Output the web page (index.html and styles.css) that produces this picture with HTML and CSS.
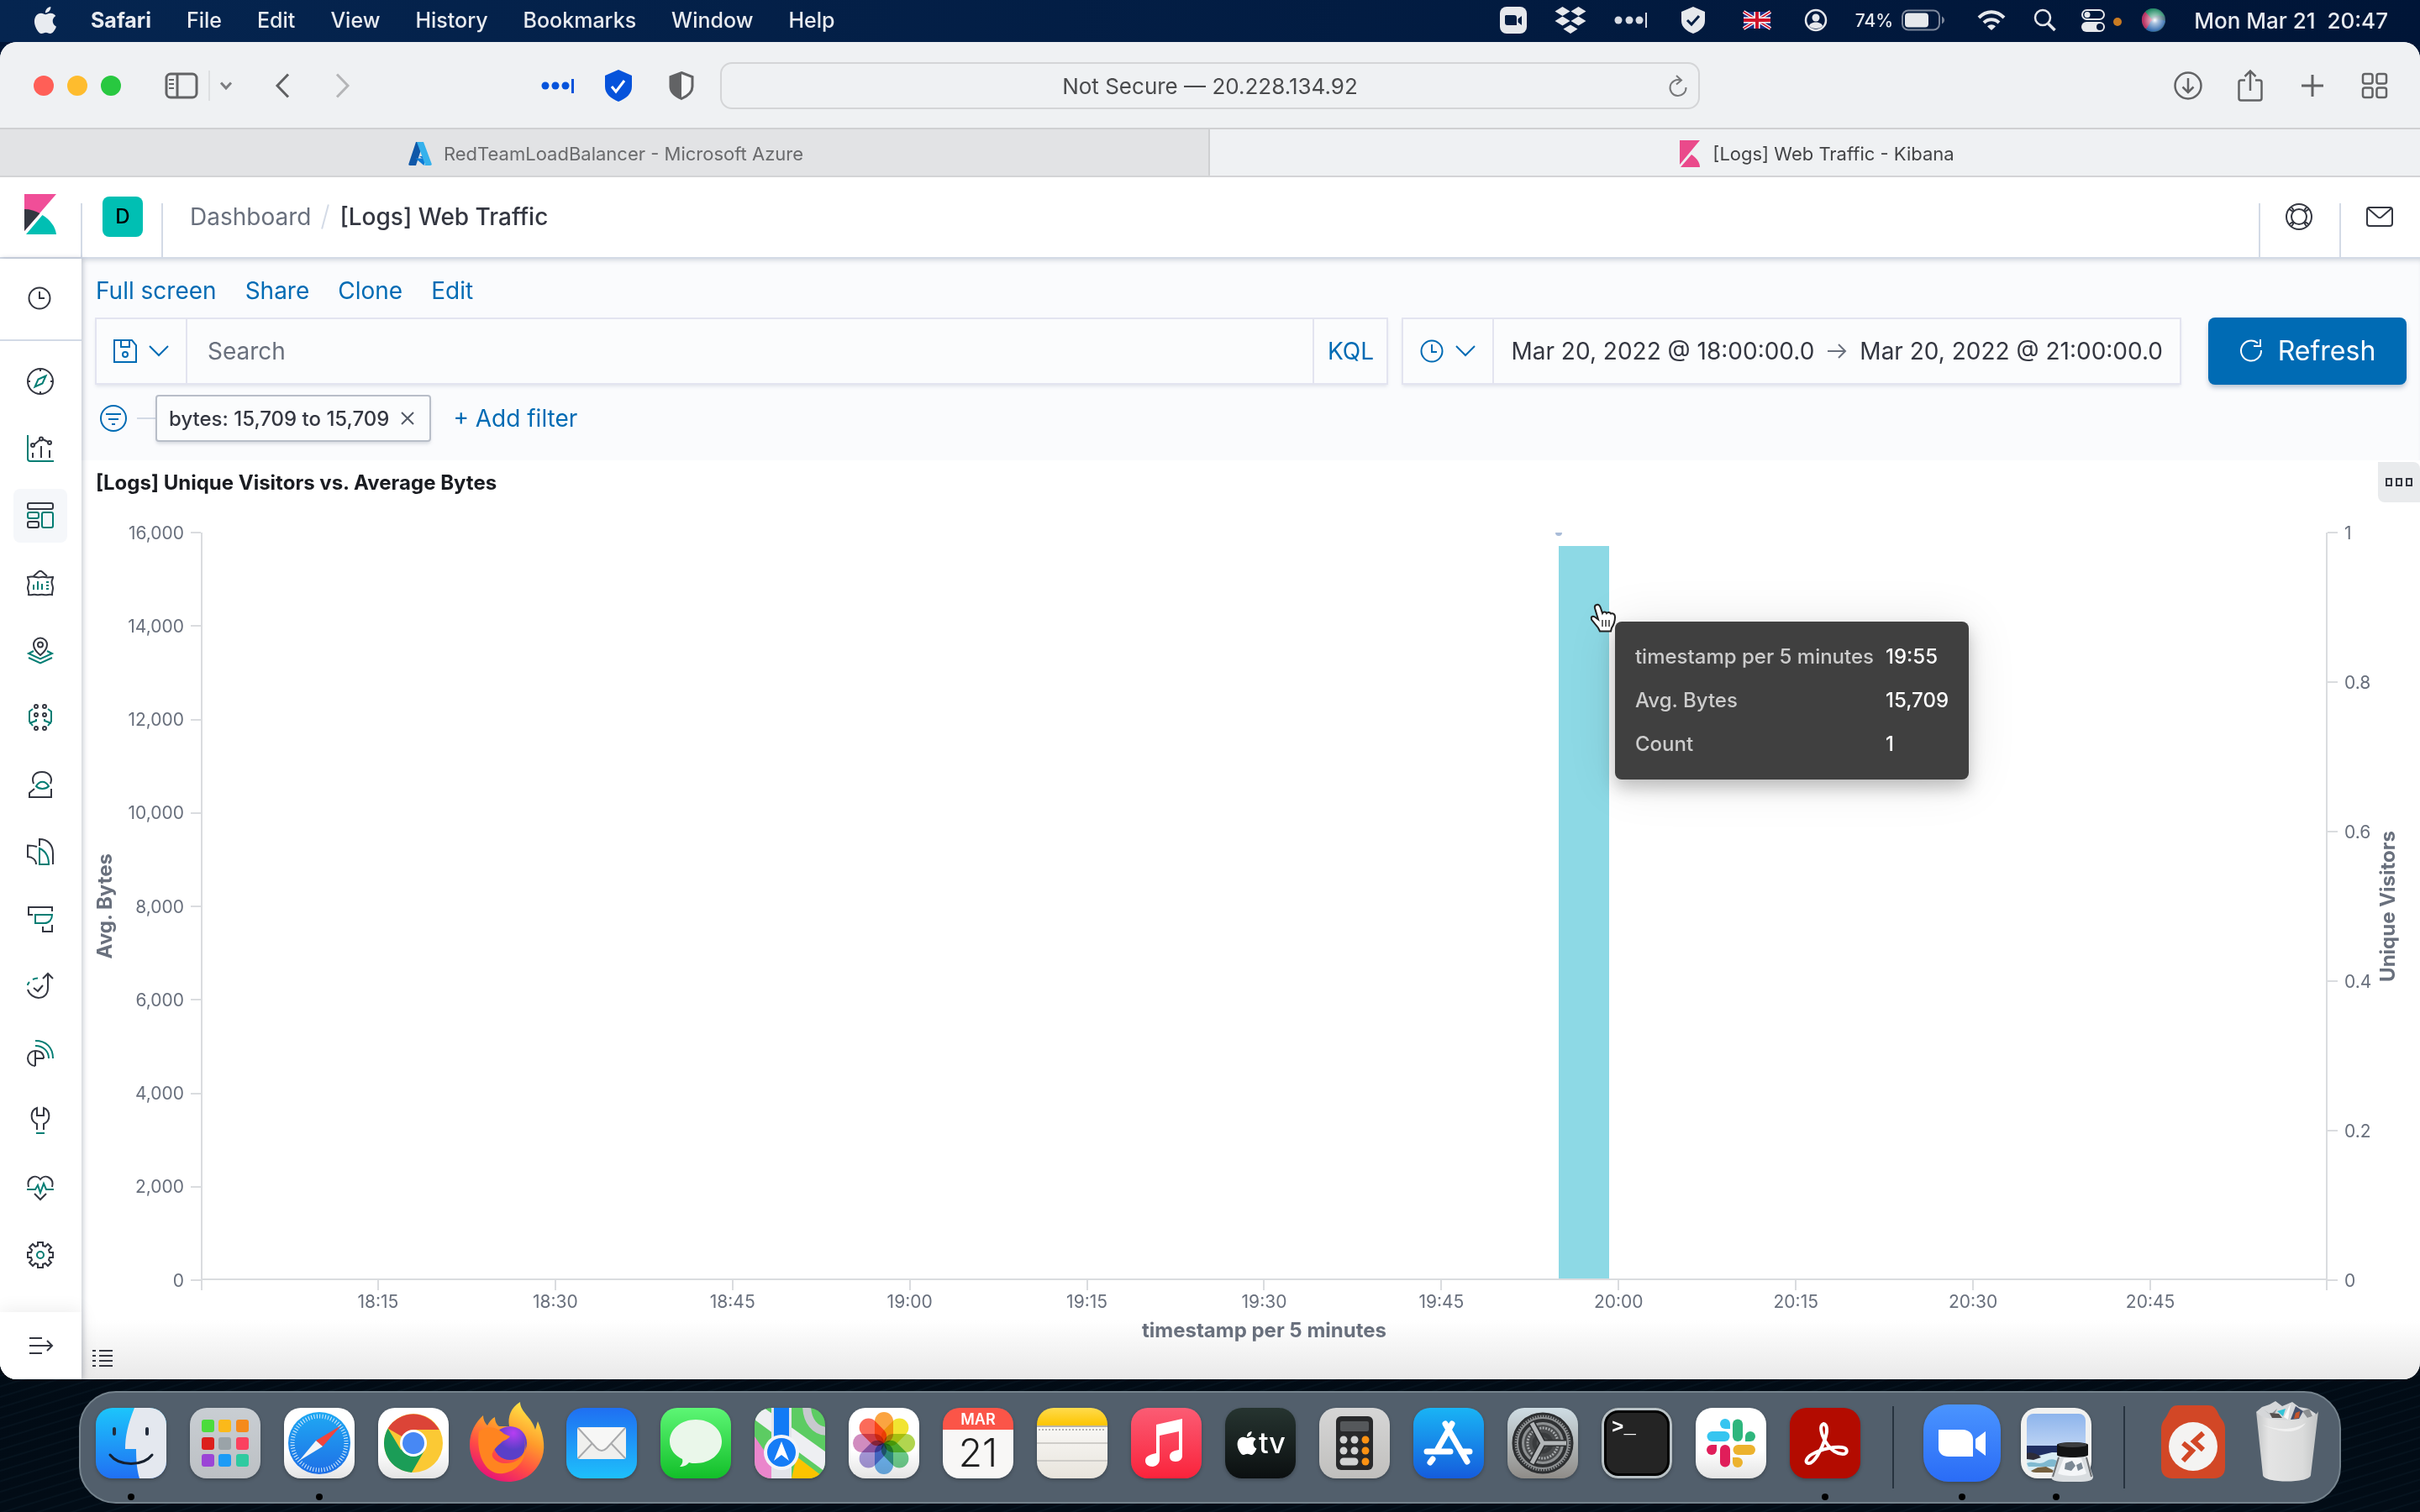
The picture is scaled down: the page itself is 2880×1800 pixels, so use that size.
FILE: index.html
```html
<!DOCTYPE html>
<html lang="en">
<head>
<meta charset="utf-8">
<title>[Logs] Web Traffic - Kibana</title>
<link rel="stylesheet" href="styles.css">
</head>
<body>
<header class="menubar">
  <nav class="menus" aria-label="Menu bar">
    <svg class="apple" viewBox="0 0 24 24" width="32" height="32" fill="#e8ebf0"><path d="M12.152 6.896c-.948 0-2.415-1.078-3.96-1.04-2.04.027-3.91 1.183-4.961 3.014-2.117 3.675-.546 9.103 1.519 12.09 1.013 1.454 2.208 3.09 3.792 3.039 1.52-.065 2.09-.987 3.935-.987 1.831 0 2.35.987 3.96.948 1.637-.026 2.676-1.48 3.676-2.948 1.156-1.688 1.636-3.325 1.662-3.415-.039-.013-3.182-1.221-3.22-4.857-.026-3.04 2.48-4.494 2.597-4.559-1.429-2.09-3.623-2.324-4.39-2.376-2-.156-3.675 1.09-4.61 1.09zM15.53 3.83c.843-1.012 1.4-2.427 1.245-3.83-1.207.052-2.662.805-3.532 1.818-.78.896-1.454 2.338-1.273 3.714 1.338.104 2.715-.688 3.559-1.701"/></svg>
    <button class="menu app">Safari</button>
    <button class="menu">File</button>
    <button class="menu">Edit</button>
    <button class="menu">View</button>
    <button class="menu">History</button>
    <button class="menu">Bookmarks</button>
    <button class="menu">Window</button>
    <button class="menu">Help</button>
  </nav>
  <div class="status">
    <svg width="32" height="32" viewBox="0 0 32 32"><rect width="32" height="32" rx="8" fill="#e6e8ec"/><path d="M7 10h10a3 3 0 0 1 3 3v9H9a3 3 0 0 1-3-3v-8zM21.500 14.500 26 11v11l-4.500-3.500z" fill="#051d42"/></svg>
    <svg width="40" height="34" viewBox="0 0 40 34" fill="#e6e8ec"><path d="M10.500 1l9 5.500-9 5.500-9-5.500zM29.500 1l9 5.500-9 5.500-9-5.500zM10.500 12.500l9 5.500-9 5.500-9-5.500zM29.500 12.500l9 5.500-9 5.500-9-5.500zM20 22.500l8.500 5-8.500 5.500-8.500-5.500z"/></svg>
    <svg width="40" height="20" viewBox="0 0 40 20" fill="#d8dce4"><circle cx="5" cy="10" r="4.500"/><circle cx="18" cy="10" r="4.500"/><circle cx="30" cy="10" r="4.500"/><path d="M37 1h2v18h-2z"/></svg>
    <svg width="44" height="34" viewBox="0 0 44 34"><path d="M22 1l14 6v11c0 7-6 12-14 15C14 30 8 25 8 18V7z" fill="#e6e8ec"/><path d="M15 17l5 5 9-10" fill="none" stroke="#041d42" stroke-width="3"/></svg>
    <svg width="44" height="20" viewBox="0 0 44 20"><path fill="#1b2f86" d="M6 0h32v20H6z"/><path d="M6 0l32 20M38 0L6 20" stroke="#fff" stroke-width="4"/><path d="M6 0l32 20M38 0L6 20" stroke="#d0142c" stroke-width="1.500"/><path d="M22 0v20M6 10h32" stroke="#fff" stroke-width="7"/><path d="M22 0v20M6 10h32" stroke="#d0142c" stroke-width="4"/></svg>
    <svg width="32" height="28" viewBox="0 0 32 28"><circle cx="16" cy="14" r="12" fill="none" stroke="#e6e8ec" stroke-width="2.500"/><circle cx="16" cy="11" r="4.500" fill="#e6e8ec"/><path d="M8 21c1-6 15-6 16 0-3 4-13 4-16 0z" fill="#e6e8ec"/></svg>
    <span class="battery"><span>74%</span><svg width="52" height="26" viewBox="0 0 52 26"><rect x="1" y="1.500" width="44" height="23" rx="7" fill="none" stroke="#7d889c" stroke-width="2"/><rect x="4" y="4.500" width="28" height="17" rx="4" fill="#e6e8ec"/><path d="M48 8.500c4 2 4 7 0 9z" fill="#7d889c"/></svg></span>
    <svg width="34" height="26" viewBox="0 0 34 26" fill="none" stroke="#e6e8ec" stroke-width="4"><path d="M2 10c9-9 21-9 30 0M8 16c5-5 13-5 18 0"/><path d="M12 20.500c3-3 7-3 10 0L17 25z" fill="#e6e8ec" stroke="none"/></svg>
    <svg width="28" height="28" viewBox="0 0 28 28" fill="none" stroke="#e6e8ec" stroke-width="2.500"><circle cx="12" cy="11" r="9"/><path d="M18.500 18l8 8" stroke-width="3.500"/></svg>
    <svg width="100" height="30" viewBox="0 0 100 30"><defs><radialGradient id="siri" cx=".55" cy=".5"><stop offset="0" stop-color="#fff"/><stop offset=".3" stop-color="#fff" stop-opacity=".6"/><stop offset="1" stop-color="#fff" stop-opacity="0"/></radialGradient></defs><rect x="-1" y="3" width="26" height="11" rx="5.500" fill="none" stroke="#e6e8ec" stroke-width="2"/><circle cx="5" cy="8.500" r="3.500" fill="#e6e8ec"/><rect x="-2" y="17" width="28" height="12" rx="6" fill="#e6e8ec"/><circle cx="20" cy="23" r="4" fill="#03193b"/><circle cx="41" cy="17" r="5" fill="#c97b22"/><circle cx="84" cy="15" r="14" fill="#33626f"/><path d="M74 5c6-7 19-5 23 6-7-3-14-1-17 3z" fill="#1f8a63"/><path d="M74 5c-6 6-5 14 0 20 6 0 9-5 9-10z" fill="#b83262"/><path d="M75 26c9 6 20 1 23-10-7-3-15-1-17 0z" fill="#2b66ad"/><circle cx="84" cy="15" r="14" fill="url(#siri)"/></svg>
    <time class="clock">Mon Mar 21&nbsp; 20:47</time>
  </div>
</header>

<main class="window">
  <div class="toolbar">
    <div class="tool-left">
      <div class="lights"><button class="light close" aria-label="Close"></button><button class="light mini" aria-label="Minimize"></button><button class="light full" aria-label="Zoom"></button></div>
      <div class="side-tools">
        <button aria-label="Sidebar"><svg width="40" height="32" viewBox="0 0 40 32" fill="none" stroke="#626365" stroke-width="3"><rect x="2" y="2" width="36" height="28" rx="5"/><path d="M15 2v28"/><path d="M5 9h6M5 14h6M5 19h6" stroke-width="2"/></svg></button>
        <span class="tool-sep"></span>
        <button aria-label="Tab groups"><svg width="14" height="10" viewBox="0 0 14 10" fill="none" stroke="#7c7d80" stroke-width="3"><path d="M1 1.500l6 6.500 6-6.500"/></svg></button>
      </div>
      <div class="history">
        <button aria-label="Back"><svg width="16" height="30" viewBox="0 0 16 30" fill="none" stroke="#5f6062" stroke-width="3"><path d="M15 1.500L2 15l13 13.500"/></svg></button>
        <button aria-label="Forward"><svg width="16" height="30" viewBox="0 0 16 30" fill="none" stroke="#b4b5b7" stroke-width="3"><path d="M1 1.500L14 15 1 28.500"/></svg></button>
      </div>
      <div class="extensions">
        <button aria-label="Passwords"><svg width="40" height="20" viewBox="0 0 40 20" fill="#0653db"><circle cx="5" cy="10" r="4.500"/><circle cx="17" cy="10" r="4.500"/><circle cx="29" cy="10" r="4.500"/><path d="M36 2h3v17h-3z"/></svg></button>
        <button aria-label="Protection"><svg width="40" height="38" viewBox="0 0 40 38"><path d="M16 0l16 7v13c0 9-7 14-16 18C7 34 0 29 0 20V7z" fill="#0653db"/><path d="M8 20l5 6 10-13" fill="none" stroke="#fff" stroke-width="3"/></svg></button>
        <button aria-label="Privacy report"><svg width="30" height="34" viewBox="0 0 30 34"><path d="M15 1.500l13 5V18c0 7-5 11-13 14.500C7 29 2 25 2 18V6.500z" fill="#f6f7f8" stroke="#626365" stroke-width="3"/><path d="M15 1v32C7 29 2 25 2 18V6.500z" fill="#626365"/></svg></button>
      </div>
    </div>
    <div class="address">
      <input type="text" aria-label="Address" value="Not Secure — 20.228.134.92">
      <button class="reload" aria-label="Reload"><svg width="24" height="26" viewBox="0 0 24 26" fill="none" stroke="#77787a" stroke-width="2"><path d="M15 6.500A9.500 9.500 0 1 0 21.500 15M10 1l6 5.500-6 5"/></svg></button>
    </div>
    <div class="tool-right">
      <button aria-label="Downloads"><svg width="36" height="36" viewBox="0 0 36 36" fill="none" stroke="#626365" stroke-width="2.500"><circle cx="18" cy="18" r="15.500"/><path d="M18 9v17M11.500 19.500L18 26l6.500-6.500"/></svg></button>
      <button aria-label="Share"><svg width="36" height="38" viewBox="0 0 36 38" fill="none" stroke="#626365" stroke-width="2.500"><path d="M12 12.500H7a2.500 2.500 0 0 0-2.500 2.500v19A2.500 2.500 0 0 0 7 36.500h22a2.500 2.500 0 0 0 2.500-2.500V15a2.500 2.500 0 0 0-2.500-2.500h-5M18 25V2M11.500 8L18 1.500 24.500 8"/></svg></button>
      <button aria-label="New tab"><svg width="36" height="36" viewBox="0 0 36 36" stroke="#626365" stroke-width="3"><path d="M18 5v26M5 18h26"/></svg></button>
      <button aria-label="Tab overview"><svg width="36" height="36" viewBox="0 0 36 36" fill="none" stroke="#626365" stroke-width="2.500"><rect x="4" y="4" width="11.500" height="11.500" rx="2.500"/><rect x="20.500" y="4" width="11.500" height="11.500" rx="2.500"/><rect x="4" y="20.500" width="11.500" height="11.500" rx="2.500"/><rect x="20.500" y="20.500" width="11.500" height="11.500" rx="2.500"/></svg></button>
    </div>
  </div>

  <div class="tabs">
    <button class="tab">
      <svg width="28" height="28" viewBox="0 0 28 28"><path d="M9 0h9L9 28H2c-1.500 0-2-1-1.600-2z" fill="#1058a8"/><path d="M13 17h10l-6 3z" fill="#0f70cc"/><path d="M8.500 19.500h12l-2 8.500z" fill="#0d7bd6"/><path d="M10 0h8l9.700 26c.4 1-.2 2-1.700 2h-8c1.500 0 2-1 1.600-2z" fill="#35b1ec"/></svg>
      RedTeamLoadBalancer - Microsoft Azure
    </button>
    <button class="tab current">
      <svg width="26" height="32" viewBox="0 0 26 32" fill="#ea4a8b"><path d="M1 0h24L1 29zM2 32l13-15c6 4 10 9 10 15z"/></svg>
      [Logs] Web Traffic - Kibana
    </button>
  </div>

  <div class="kibana">
    <header class="k-header">
      <a href="#" class="k-cell logo" aria-label="Kibana home"><svg width="38" height="48" viewBox="0 0 38 48"><path d="M0 0h38L0 44z" fill="#f04e98"/><path d="M0 18c7 0 13 2 18.500 5L0 44z" fill="#343741"/><path d="M21.500 25C31 31 37 39 38 48H2z" fill="#00bfb3"/></svg></a>
      <button class="k-cell rule space" aria-label="Default space"><span class="avatar">D</span></button>
      <nav class="crumbs rule" aria-label="Breadcrumb"><a href="#">Dashboard</a><span class="slash"></span><strong>[Logs] Web Traffic</strong></nav>
      <button class="k-cell rule" aria-label="Help"><svg width="32" height="32" viewBox="0 0 32 32" fill="none" stroke="#343741" stroke-width="2"><circle cx="16" cy="16" r="15"/><circle cx="16" cy="16" r="9"/><path d="M7 4.500l3.500 5M4.500 7l5 3.500M25 4.500l-3.500 5M27.500 7l-5 3.500M7 27.500l3.500-5M4.500 25l5-3.500M25 27.500l-3.500-5M27.500 25l-5-3.500"/></svg></button>
      <button class="k-cell rule" aria-label="Newsfeed"><svg width="32" height="24" viewBox="0 0 32 24" fill="none" stroke="#343741" stroke-width="2"><rect x="1" y="1" width="30" height="22" rx="3"/><path d="M2 2l12 10.500c1.500 1.200 2.500 1.200 4 0L30 2"/></svg></button>
    </header>

    <nav class="side" aria-label="Applications">
      <a class="recent" href="#" aria-label="Recently viewed"><svg width="28" height="28" viewBox="0 0 28 28" fill="none" stroke="#343741" stroke-width="2"><circle cx="14" cy="14" r="12.500"/><path d="M14 6v8h6"/></svg></a>
      <div class="apps">
        <a href="#" aria-label="Discover"><svg class="ico" viewBox="0 0 32 32"><circle cx="16" cy="16" r="15"/><path d="M16 1v3M16 28v3M1 16h3M28 16h3"/><path class="g" d="M22.500 9.500l-4 9-9 4 4-9z"/></svg></a>
        <a href="#" aria-label="Visualize"><svg class="ico" viewBox="0 0 32 32"><path class="g" d="M1 0v28a3 3 0 0 0 3 3h28"/><path d="M7 21v6M17 13v14M27 18v9M9 11l6-5M19 5l6 3"/><circle cx="7" cy="12" r="2"/><circle cx="17" cy="4.500" r="2"/><circle cx="27" cy="9" r="2"/></svg></a>
        <a href="#" class="active" aria-label="Dashboard"><svg class="ico" viewBox="0 0 32 32"><rect x="1" y="1" width="30" height="7" rx="2"/><rect class="g" x="1" y="12" width="13" height="7" rx="2"/><rect x="1" y="23" width="13" height="7" rx="2"/><rect class="g" x="18" y="12" width="13" height="18" rx="2"/></svg></a>
        <a href="#" aria-label="Canvas"><svg class="ico" viewBox="0 0 32 32"><path d="M8 8l6-5.500c1.500-1 2.500-1 4 0L24 8M1 9c5 0 5-1.500 10 0s5-1 10 0 5 0 10 0c0 3-1.500 3-1.500 6s1.500 4 1.500 7-1 3-1 8c-5-1-5 1-10 0s-5 1-9 0-5 1-9 0c1-4-1-5-1-8s1.500-4 1.500-7S1 12 1 9z"/><path class="g" d="M8 18v6M13 14v10M18 17v7M23 15h3M23 19h3M23 23h3"/></svg></a>
        <a href="#" aria-label="Maps"><svg class="ico" viewBox="0 0 32 32"><path d="M16 22c-5-4-8-8-8-12.500a8 8 0 0 1 16 0C24 14 21 18 16 22z"/><circle cx="16" cy="9.500" r="3"/><path class="g" d="M8 17l-6 3 14 6.500L30 20l-6-3M2 25l14 6.500L30 25"/></svg></a>
        <a href="#" aria-label="Machine Learning"><svg class="ico" viewBox="0 0 32 32"><circle cx="11" cy="3" r="2"/><circle cx="21" cy="3" r="2"/><circle cx="11" cy="13" r="2"/><circle cx="21" cy="13" r="2"/><circle cx="11" cy="29" r="2"/><circle cx="21" cy="29" r="2"/><path class="g" d="M7 6L3 9v12l4 5M25 6l4 3v12l-4 5M3 23l8-3v-2M29 23l-8-3v-2"/></svg></a>
        <a href="#" aria-label="Infrastructure"><svg class="ico" viewBox="0 0 32 32"><path d="M8 15C5 7 9 1 18 1s13 7 10 14M9 21l-6 5v5h26V21"/><path class="g" d="M11 18c4-7 11-7 15 0-4 4-11 4-15 0z"/></svg></a>
        <a href="#" aria-label="Logs"><svg class="ico" viewBox="0 0 32 32"><path d="M15 9V1c10 0 16 7 16 17v13M12 10c-3-1-6-1.500-11-1.500V22c6 0 10 4 10 9"/><path class="g" d="M15 12v19h11c0-10-4-16-11-19z"/></svg></a>
        <a href="#" aria-label="APM"><svg class="ico" viewBox="0 0 32 32"><path d="M7 11H2V2h28v5M30 23v8H19v-6"/><path class="g" d="M10 11h20c0 6-4 10-9 10H10z"/></svg></a>
        <a href="#" aria-label="Uptime"><svg class="ico" viewBox="0 0 32 32"><path d="M1 20c4 13 24 14 24-2V2M19 7l6-6 6 6M8 18l5 4 6-7"/><path class="g" d="M1 15c0-2 1-3 2-4M7 8c2-1 4-1.500 6-1.500"/></svg></a>
        <a href="#" aria-label="SIEM"><svg class="ico" viewBox="0 0 32 32"><path d="M10 31a9 9 0 0 1 0-18c6 0 10 3 10 9M10 13v18M10 22h10"/><path class="g" d="M10 7c9 0 16 6 16 15M10 1c13 0 21 8 21 21"/></svg></a>
        <a href="#" aria-label="Dev Tools"><svg class="ico" viewBox="0 0 32 32"><path d="M12 27v-7C3 16 4 4 12 1v9h8V1c8 3 9 15 0 19v7"/><path class="g" d="M11 31h10"/></svg></a>
        <a href="#" aria-label="Monitoring"><svg class="ico" viewBox="0 0 32 32"><path d="M2 15C-1 4 11-1 16 6c5-7 17-2 14 9M9 23l7 7 7-7"/><path class="g" d="M0 18h10l3-5 3 9 4-11 3 7h9"/></svg></a>
        <a href="#" aria-label="Management"><svg class="ico" viewBox="0 0 32 32"><path d="M13 1h6v4l3 1 3-3 4 4-3 3 1 3h4v6h-4l-1 3 3 3-4 4-3-3-3 1v4h-6v-4l-3-1-3 3-4-4 3-3-1-3H1v-6h4l1-3-3-3 4-4 3 3 3-1z"/><circle class="g" cx="16" cy="16" r="4"/></svg></a>
      </div>
      <button class="expand" aria-label="Expand"><svg width="28" height="20" viewBox="0 0 28 20" fill="none" stroke="#343741" stroke-width="2"><path d="M0 1h15M0 10h26M0 19h15M21 4l6 6-6 6"/></svg></button>
    </nav>

    <section class="page">
      <div class="controls">
        <nav class="actions" aria-label="Dashboard actions"><a href="#">Full screen</a><a href="#">Share</a><a href="#">Clone</a><a href="#">Edit</a></nav>
        <div class="query">
          <div class="box search">
            <button class="box-menu" aria-label="Saved queries"><svg width="28" height="28" viewBox="0 0 28 28" fill="none" stroke="#006bb4" stroke-width="2"><path d="M1 1h21l5 6v20H1zM9 1v8h10V1"/><circle cx="14" cy="18" r="3"/></svg><svg width="24" height="14" viewBox="0 0 24 14" fill="none" stroke="#006bb4" stroke-width="2"><path d="M1 1l11 11L23 1"/></svg></button>
            <input type="text" placeholder="Search" aria-label="Search">
            <button class="kql">KQL</button>
          </div>
          <div class="box dates">
            <button class="box-menu" aria-label="Quick select"><svg width="28" height="28" viewBox="0 0 28 28" fill="none" stroke="#006bb4" stroke-width="2"><circle cx="14" cy="14" r="12.500"/><path d="M14 6v9h6"/></svg><svg width="24" height="14" viewBox="0 0 24 14" fill="none" stroke="#006bb4" stroke-width="2"><path d="M1 1l11 11L23 1"/></svg></button>
            <div class="range"><button>Mar 20, 2022 @ 18:00:00.0</button><svg width="22" height="18" viewBox="0 0 22 18" fill="none" stroke="#69707d" stroke-width="2"><path d="M0 9h20M13 1l8 8-8 8"/></svg><button>Mar 20, 2022 @ 21:00:00.0</button></div>
          </div>
          <button class="refresh"><svg width="28" height="28" viewBox="0 0 28 28" fill="none" stroke="#fff" stroke-width="2"><path d="M22 5.500A12 12 0 1 0 26 14M25 1v8h-8"/></svg>Refresh</button>
        </div>
        <div class="filters">
          <button aria-label="Filter options"><svg width="32" height="32" viewBox="0 0 32 32" fill="none" stroke="#006bb4" stroke-width="2"><circle cx="16" cy="16" r="15"/><path d="M7 11h18M10 17h12M14 23h4"/></svg></button>
          <span class="dash"></span>
          <span class="pill">bytes: 15,709 to 15,709<button aria-label="Remove filter"><svg width="16" height="16" viewBox="0 0 16 16" stroke="#535966" stroke-width="2"><path d="M1 1l14 14M15 1L1 15"/></svg></button></span>
          <button class="add">+ Add filter</button>
        </div>
      </div>

      <article class="panel">
        <header class="panel-head"><h2>[Logs] Unique Visitors vs. Average Bytes</h2><button class="more" aria-label="Panel options"><svg width="32" height="10" viewBox="0 0 32 10" fill="none" stroke="#343741" stroke-width="2"><path d="M1 1h6v8H1zM13 1h6v8h-6zM25 1h6v8h-6z"/></svg></button></header>
        <div class="chart">
          <div class="axis-title left"><span>Avg. Bytes</span></div>
          <ul class="y-axis left"><li>16,000</li><li>14,000</li><li>12,000</li><li>10,000</li><li>8,000</li><li>6,000</li><li>4,000</li><li>2,000</li><li>0</li></ul>
          <div class="plot">
            <div class="bar" style="left:63.889%;width:2.370%;height:98.180%"></div>
            <div class="point" style="left:63.889%"></div>
            <table class="tooltip">
              <tr><th scope="row">timestamp per 5 minutes</th><td>19:55</td></tr>
              <tr><th scope="row">Avg. Bytes</th><td>15,709</td></tr>
              <tr><th scope="row">Count</th><td>1</td></tr>
            </table>
            <svg class="pointer" width="32" height="36" viewBox="0 0 32 36"><path d="M8 2c3-1 4 1 5 4l2 6c1-2 4-2 5 0 1-1.500 4-1.500 5 .5 3-1 5 1 5 4 0 7-2 10-4 13l-1 4H12l-2-4-8-10c-1-3 1-5 4-3l4 3L6 6c-.5-2 0-3.500 2-4z" fill="#fff" stroke="#222" stroke-width="2"/><path d="M15 20v8M19 20v8M23 20v8" stroke="#333" stroke-width="1.500"/></svg>
          </div>
          <ul class="y-axis right"><li>1</li><li>0.8</li><li>0.6</li><li>0.4</li><li>0.2</li><li>0</li></ul>
          <div class="axis-title right"><span>Unique Visitors</span></div>
          <div class="x-axis">
            <ul><li>18:15</li><li>18:30</li><li>18:45</li><li>19:00</li><li>19:15</li><li>19:30</li><li>19:45</li><li>20:00</li><li>20:15</li><li>20:30</li><li>20:45</li></ul>
            <p>timestamp per 5 minutes</p>
          </div>
        </div>
        <footer class="panel-foot"><button aria-label="Toggle legend"><svg width="24" height="22" viewBox="0 0 24 22" stroke="#343741" stroke-width="2"><path d="M0 2h4M8 2h16M0 8h4M8 8h16M0 14h4M8 14h16M0 20h4M8 20h16"/></svg></button></footer>
      </article>
    </section>
  </div>
</main>

<footer class="dock-area">
  <nav class="dock" aria-label="Dock">
    <button class="app-icon running" aria-label="Finder"><span class="tile finder"><svg viewBox="0 0 84 84"><path d="M46 0C38 20 35 34 35 49h13c0 14 1 25 4 35h32V0z" fill="#e4e8ef"/><path d="M22 25v6M61 25v6" stroke="#222c3c" stroke-width="4" stroke-linecap="round"/><path d="M17 56c11 14 39 14 50 0" fill="none" stroke="#16202e" stroke-width="3" stroke-linecap="round"/></svg></span></button>
    <button class="app-icon" aria-label="Launchpad"><span class="tile launchpad"><svg viewBox="0 0 84 84"><rect x="14" y="14" width="15" height="15" rx="3" fill="#4bdc3c"/><rect x="34" y="14" width="15" height="15" rx="3" fill="#fbb91a"/><rect x="55" y="14" width="15" height="15" rx="3" fill="#f58a1b"/><rect x="14" y="35" width="15" height="15" rx="3" fill="#dc1f1c"/><rect x="34" y="35" width="15" height="15" rx="3" fill="#9aa3a8"/><rect x="55" y="35" width="15" height="15" rx="3" fill="#fb415f"/><rect x="14" y="55" width="15" height="15" rx="3" fill="#9b45d6"/><rect x="34" y="55" width="15" height="15" rx="3" fill="#1c9bf6"/><rect x="55" y="55" width="15" height="15" rx="3" fill="#2ecaa0"/></svg></span></button>
    <button class="app-icon running" aria-label="Safari"><span class="tile white"><svg viewBox="0 0 84 84"><defs><linearGradient id="saf" x2="0" y2="1"><stop stop-color="#1fa9f3"/><stop offset="1" stop-color="#1f6fe6"/></linearGradient></defs><circle cx="42" cy="42" r="37" fill="url(#saf)"/><circle cx="42" cy="42" r="32" fill="none" stroke="#d8ecfb" stroke-width="5" stroke-dasharray="1 2.350"/><path d="M68 21L46 46l-8-7z" fill="#f0443c"/><path d="M18 63l20-24 8 7z" fill="#f3f4f6"/></svg></span></button>
    <button class="app-icon" aria-label="Chrome"><span class="tile white"><svg viewBox="0 0 84 84"><circle cx="42" cy="42" r="35" fill="#fbc934"/><path d="M42 42L11.700 24.500A35 35 0 0 1 72.300 25.500L73 26H42z" fill="#dc4437"/><path d="M11.700 24.500A35 35 0 0 0 40 77l15-26-13-9-15 8z" fill="#1b9d57"/><circle cx="42" cy="42" r="16" fill="#fff"/><circle cx="42" cy="42" r="13" fill="#4788f4"/></svg></span></button>
    <button class="app-icon" aria-label="Firefox"><svg class="bare" viewBox="0 0 84 84"><defs><linearGradient id="ff" x1=".8" y1="0" x2=".3" y2="1"><stop stop-color="#fff04b"/><stop offset=".4" stop-color="#ff9b2b"/><stop offset=".7" stop-color="#ff4b45"/><stop offset="1" stop-color="#e6107a"/></linearGradient><radialGradient id="ffp" cx=".6" cy=".2"><stop stop-color="#b73ef2"/><stop offset="1" stop-color="#5a3fc8"/></radialGradient></defs><path d="M13 9c0 5 2 9 5 12 2-4 5-8 9-10 0 5 2 9 5 11h12C42 10 46 0 57-7c0 12 14 18 18 33l3-10c8 18 10 35 3 48C74 79 60 88 43 88 18 88-3 70-3 44-3 29 4 17 13 9z" fill="url(#ff)"/><circle cx="45" cy="42" r="20" fill="url(#ffp)"/><path d="M8 28c10-9 23-4 30 3l7 3c-4 5-8 4-11 8-5 4-8 7-10 12-2 6 7 12 15 12 19 1 28-15 22-31 8 20-4 40-24 43C16 81 4 56 8 28z" fill="#ff8420"/></svg></button>
    <button class="app-icon" aria-label="Mail"><span class="tile mail"><svg viewBox="0 0 84 84"><rect x="13" y="23" width="58" height="38" rx="3" fill="#f0f0ee"/><path d="M14 60l19-20M70 60L51 40" stroke="#a9aaac" stroke-width="2"/><path d="M14 24l22 24c4 4 8 4 12 0l22-24" fill="#f7f7f6" stroke="#a9aaac" stroke-width="2"/></svg></span></button>
    <button class="app-icon" aria-label="Messages"><span class="tile messages"><svg viewBox="0 0 84 84"><path d="M42 14c17 0 31 11 31 26S59 66 42 66c-3 0-6 0-8-1-2 3-6 5-11 5 3-3 4-6 3-9-9-4-15-12-15-21 0-15 14-26 31-26z" fill="#eaf7ea"/></svg></span></button>
    <button class="app-icon" aria-label="Maps"><span class="tile maps"><svg viewBox="0 0 84 84"><path d="M0 34l34 50H0z" fill="#ea86cc"/><path d="M44 84l6-26 34 26z" fill="#fcc400"/><path d="M0 14l84 62V52L0-8z" fill="#eeeff2"/><path d="M62-4c0 20 10 32 26 32" fill="none" stroke="#c7c9ce" stroke-width="10"/><path d="M20 0h24v84H20z" fill="#e2e4ea"/><path d="M23 0h18v44H23z" fill="#127bf5"/><circle cx="32" cy="53" r="21" fill="#f3f4f8"/><circle cx="32" cy="53" r="17" fill="#157cf6"/><path d="M32 40l9 23-9-7-9 7z" fill="#fff"/></svg></span></button>
    <button class="app-icon" aria-label="Photos"><span class="tile white"><svg class="petals" viewBox="0 0 84 84"><rect x="31" y="5" width="22" height="37" rx="11" fill="#fb9a2c"/><rect x="31" y="5" width="22" height="37" rx="11" fill="#f0e11a" transform="rotate(45 42 42)"/><rect x="31" y="5" width="22" height="37" rx="11" fill="#a9d13b" transform="rotate(90 42 42)"/><rect x="31" y="5" width="22" height="37" rx="11" fill="#5cc47d" transform="rotate(135 42 42)"/><rect x="31" y="5" width="22" height="37" rx="11" fill="#5aa5e6" transform="rotate(180 42 42)"/><rect x="31" y="5" width="22" height="37" rx="11" fill="#9a8bd2" transform="rotate(225 42 42)"/><rect x="31" y="5" width="22" height="37" rx="11" fill="#cc7fb8" transform="rotate(270 42 42)"/><rect x="31" y="5" width="22" height="37" rx="11" fill="#fb5b48" transform="rotate(315 42 42)"/></svg></span></button>
    <button class="app-icon"><span class="tile calendar"><span class="month">MAR</span><span class="day">21</span></span></button>
    <button class="app-icon" aria-label="Notes"><span class="tile notes"><svg viewBox="0 0 84 84"><path d="M0 22h84" stroke="#b9b4a8" stroke-width="2"/><path d="M2 26h80" stroke="#b5b3ae" stroke-width="2" stroke-dasharray="2 2"/><path d="M0 42h84M0 63h84" stroke="#cfcdc9" stroke-width="2"/></svg></span></button>
    <button class="app-icon" aria-label="Music"><span class="tile music"><svg viewBox="0 0 84 84" fill="#fff"><path d="M30 20l31-7v44c0 4-3 7-8 7s-7-3-7-6c0-5 4-7 11-8V28l-23 5v28c0 5-3 8-8 9-6 0-9-3-9-7 0-5 4-7 13-9z"/></svg></span></button>
    <button class="app-icon"><span class="tile tv"><svg class="tv-apple" viewBox="0 0 24 24" width="28" height="28" fill="#fff"><path d="M12.152 6.896c-.948 0-2.415-1.078-3.960-1.040-2.040.027-3.910 1.183-4.961 3.014-2.117 3.675-.546 9.103 1.519 12.090 1.013 1.454 2.208 3.090 3.792 3.039 1.520-.065 2.090-.987 3.935-.987 1.831 0 2.350.987 3.960.948 1.637-.026 2.676-1.480 3.676-2.948 1.156-1.688 1.636-3.325 1.662-3.415-.039-.013-3.182-1.221-3.220-4.857-.026-3.040 2.480-4.494 2.597-4.559-1.429-2.090-3.623-2.324-4.390-2.376-2-.156-3.675 1.090-4.610 1.090zM15.530 3.830c.843-1.012 1.400-2.427 1.245-3.830-1.207.052-2.662.805-3.532 1.818-.780.896-1.454 2.338-1.273 3.714 1.338.104 2.715-.688 3.559-1.701"/></svg><span>tv</span></span></button>
    <button class="app-icon" aria-label="Calculator"><span class="tile calculator"><svg viewBox="0 0 84 84"><rect x="20" y="10" width="44" height="64" rx="6" fill="#28292b"/><rect x="25" y="16" width="34" height="12" rx="2" fill="#55585b"/><g fill="#d2d3d4"><circle cx="29" cy="38" r="4.500"/><circle cx="42" cy="38" r="4.500"/><circle cx="29" cy="51" r="4.500"/><circle cx="42" cy="51" r="4.500"/><rect x="24.500" y="59.500" width="22" height="9" rx="4.500"/></g><g fill="#fb9213"><circle cx="55" cy="38" r="4.500"/><circle cx="55" cy="51" r="4.500"/><circle cx="55" cy="64" r="4.500"/></g></svg></span></button>
    <button class="app-icon" aria-label="App Store"><span class="tile store"><svg viewBox="0 0 84 84" fill="none" stroke="#fff" stroke-width="7" stroke-linecap="round"><path d="M46 19L29 49M38 19l26 45M16 52h28M57 52h10M23 61l-3 4"/></svg></span></button>
    <button class="app-icon" aria-label="System Preferences"><span class="tile settings"><svg viewBox="0 0 84 84" fill="none"><circle cx="42" cy="42" r="35" fill="#8d9092" stroke="#2b2d2f" stroke-width="3"/><circle cx="42" cy="42" r="33" stroke="#333537" stroke-width="4" stroke-dasharray="1.600 1.600"/><circle cx="42" cy="42" r="27" stroke="#2f3133" stroke-width="4"/><circle cx="42" cy="42" r="22" fill="#4b4d4f"/><circle cx="42" cy="42" r="18" stroke="#a7aaac" stroke-width="3" stroke-dasharray="2 1.500"/><circle cx="42" cy="42" r="10" stroke="#393b3d" stroke-width="5"/><path d="M42 42h28M42 42L29 18M42 42L29 66" stroke="#2b2d2f" stroke-width="8"/><path d="M42 42h28M42 42L29 18M42 42L29 66" stroke="#b3b6b8" stroke-width="5"/></svg></span></button>
    <button class="app-icon"><span class="tile terminal"><span class="prompt">&gt;_</span></span></button>
    <button class="app-icon" aria-label="Slack"><span class="tile white"><svg viewBox="0 0 84 84" fill="none" stroke-width="12" stroke-linecap="round"><path d="M19.500 34h15" stroke="#36c5f0"/><path d="M35 13a6 6 0 0 1 6 6v6h-6a6 6 0 0 1 0-12z" fill="#36c5f0"/><path d="M50 19.500V34" stroke="#2eb67d"/><path d="M71 34a6 6 0 0 1-6 6h-6v-6a6 6 0 0 1 12 0z" fill="#2eb67d"/><path d="M50.500 50H65" stroke="#ecb22e"/><path d="M50 71a6 6 0 0 1-6-6v-6h6a6 6 0 0 1 0 12z" fill="#ecb22e"/><path d="M35 50v14.500" stroke="#e01e5a"/><path d="M13 50a6 6 0 0 1 6-6h6v6a6 6 0 0 1-12 0z" fill="#e01e5a"/></svg></span></button>
    <button class="app-icon running" aria-label="Acrobat"><span class="tile acrobat"><svg viewBox="0 0 84 84" fill="none" stroke="#fff" stroke-width="4"><path d="M40 19c-5 2-3 12 3 22s14 14 20 14 7-7-1-8c-9-1-24 2-33 7-9 4-12 11-7 12 7 1 16-17 20-29 3-9 3-17-2-18z"/></svg></span></button>
    <span class="split"></span>
    <button class="app-icon running" aria-label="Zoom"><span class="tile zoom"><svg viewBox="0 0 92 92" fill="#fff"><path d="M18 30h29c7 0 12 5 12 11v21H30c-7 0-12-4-12-10zM62 41l12-9v29l-12-9z"/></svg></span></button>
    <button class="app-icon running" aria-label="Preview"><span class="tile preview"><svg viewBox="0 0 84 84"><defs><linearGradient id="sky" x2="0" y2="1"><stop stop-color="#8db4ec"/><stop offset="1" stop-color="#bcd3f4"/></linearGradient></defs><path d="M15 7h54a8 8 0 0 1 8 8v31H7V15a8 8 0 0 1 8-8z" fill="url(#sky)"/><path d="M7 45h70v14H7z" fill="#1f2f63"/><path d="M7 60l14-3 16-4 40 1v14a9 9 0 0 1-9 9H16a9 9 0 0 1-9-9z" fill="#d9ecf4"/><path d="M7 66c8-4 14 3 22-2s12-2 16 0v6H9z" fill="#7fb9d0"/><path d="M7 54c5-2 12 0 17 5l-9 3-8-1z" fill="#2e2c38"/><path d="M12 75l8-4 10-1 8 4 4 3H18c-3 0-5-1-6-2z" fill="#75603f"/><path d="M45 57h33l8 25c0 6-9 6-25 6s-25 0-25-6z" fill="#d9dde0"/><path d="M51 60h21l6 18c-6 4-28 4-34 0z" fill="#f4f6f8"/><path d="M53 66l8-3 4 6-5 6-8-2zM66 68l6-3 2 7-6 3z" fill="#7b8894"/><path d="M45 59l-7 23M78 59l6 23" stroke="#6e7174" stroke-width="2"/><path d="M43 44c0-4 37-4 37 0v12c0 4-37 4-37 0z" fill="#121314"/><ellipse cx="61.500" cy="44" rx="17" ry="3" fill="#3c3e40"/></svg></span></button>
    <span class="split"></span>
    <button class="app-icon" aria-label="Remote Desktop"><svg class="bare" viewBox="0 0 84 84"><path d="M24-3h36c6 0 8 3 10 6 3 6 4 8 7 12 2 3 3 6 3 10v46c0 8-5 13-13 13H17C9 84 4 79 4 71V25c0-4 1-7 3-10 3-4 4-6 7-12 2-3 4-6 10-6z" fill="#d24726"/><circle cx="42" cy="46" r="29" fill="#f4f3f2"/><path d="M30 42l11 9-11 12M54 30L43 40l11 10" fill="none" stroke="#d24726" stroke-width="6"/></svg></button>
    <button class="app-icon" aria-label="Trash"><svg class="bare" viewBox="0 0 84 84"><defs><linearGradient id="bin"><stop stop-color="#c3c5c6"/><stop offset=".2" stop-color="#e4e4e4"/><stop offset=".75" stop-color="#dadbdb"/><stop offset="1" stop-color="#c2c4c5"/></linearGradient></defs><path d="M5 5l7-6 9-3 7-4 8 6 12-5 8 6 11 2 9 6-3 8H12z" fill="#d5d7d9"/><path d="M14 2l8 6 8-7-5 10zM60 4l8-3 4 9-6 2z" fill="#8c8f92"/><path d="M21 6l11 1 4 5H24z" fill="#55504e"/><path d="M30 4l10-3-3 9z" fill="#31c4d8"/><path d="M52-2l9 6-5 9-10 1z" fill="#44506b"/><path d="M52 6l5-2-1 8-6 1z" fill="#c7552a"/><path d="M46-5l-8 16 5 3z" fill="#f7f7f7"/><path d="M5 4c4 14 70 14 74 0l-9 76c-1 10-56 10-57 0z" fill="url(#bin)"/><path d="M12 20c20 8 40 6 52-2-8 12-26 14-52 2z" fill="#f0f0f0"/></svg></button>
  </nav>
</footer>
</body>
</html>
```
FILE: styles.css
```css
*, *::before, *::after { box-sizing: border-box; }

html, body { margin: 0; }

body {
  display: flex;
  flex-direction: column;
  min-height: 100vh;
  font-family: Inter, "Noto Sans", sans-serif;
  font-size: 28px;
  color: #343741;
  background:
    repeating-linear-gradient(163deg, transparent 0 5px, rgba(40, 80, 100, .1) 6px 7px, transparent 8px 12px),
    linear-gradient(#04224a, #001537 50px, #000810 140px, #020c16);
}

button, input {
  margin: 0;
  padding: 0;
  border: 0;
  background: none;
  font: inherit;
  color: inherit;
}

input { outline: none; min-width: 0; }
svg { display: block; flex: none; overflow: visible; }
a { color: inherit; text-decoration: none; }
ul { list-style: none; margin: 0; padding: 0; }
h2, p { margin: 0; }

/* Menu bar */
.menubar {
  display: flex;
  justify-content: space-between;
  align-items: center;
  height: 50px;
  padding: 0 38px 2px;
  color: #e8ebf0;
  font-size: 25px;
  font-weight: 500;
  white-space: nowrap;
  background: linear-gradient(90deg, #052550, #001537);
}
.menus { display: flex; align-items: center; gap: 42px; }
.menu.app { font-weight: 700; margin-left: -4px; }
.status { display: flex; align-items: center; gap: 32px; }
.battery { display: flex; align-items: center; justify-content: flex-end; gap: 10px; width: 112px; padding-right: 6px; font-size: 21px; }
.clock { font-size: 26px; }

/* Browser window */
.window {
  flex: 1;
  display: flex;
  flex-direction: column;
  border-radius: 20px;
  overflow: hidden;
  background: #fff;
}
.toolbar {
  display: grid;
  grid-template-columns: minmax(0, 1fr) 40.5% minmax(0, 1fr);
  align-items: center;
  height: 104px;
  padding-top: 2px;
  background: #eff1f3;
  border-bottom: 2px solid #cfd0d2;
}
.tool-left { display: flex; align-items: center; padding: 0 31px 0 40px; }
.lights { display: flex; gap: 16px; }
.light { width: 24px; height: 24px; border-radius: 50%; }
.close { background: #ff5f57; }
.mini { background: #febc2e; }
.full { background: #28c840; }
.side-tools { display: flex; align-items: center; gap: 12px; margin-left: 52px; }
.tool-sep { width: 2px; height: 36px; background: #dddfe1; }
.history { display: flex; gap: 56px; margin-left: 52px; }
.extensions { display: flex; align-items: center; gap: 36px; margin-left: auto; }
.address {
  display: flex;
  align-items: center;
  height: 56px;
  padding: 0 12px 0 36px;
  border: 2px solid #d4d5d7;
  border-radius: 14px;
}
.address input { flex: 1; text-align: center; font-size: 26px; color: #4a4b4d; }
.tool-right { display: flex; align-items: center; justify-content: flex-end; gap: 38px; padding-right: 36px; }

.tabs { display: grid; grid-template-columns: 1fr 1fr; height: 57px; border-bottom: 2px solid #d3d4d6; }
.tab {
  display: flex;
  align-items: center;
  justify-content: center;
  gap: 14px;
  padding: 2px 0 0 4px;
  font-size: 22px;
  color: #6a6b6d;
  background: #e2e3e5;
  border-right: 2px solid #cfd0d2;
}
.tab.current { color: #434446; background: #eff1f3; border: 0; }

/* Kibana chrome */
.kibana {
  flex: 1;
  display: grid;
  grid-template: 97px 1fr / 97px minmax(0, 1fr);
}
.k-header { grid-column: 1 / -1; display: flex; border-bottom: 2px solid #d3dae6; background: #fff; z-index: 1; }
.k-cell { display: flex; align-items: center; justify-content: center; width: 96px; padding-bottom: 2px; }
.k-cell.logo { padding-bottom: 8px; }
.k-cell.space { padding-left: 4px; }
.rule { background: linear-gradient(#d3dae6, #d3dae6) left bottom / 2px 64px no-repeat; }
.avatar {
  width: 48px;
  height: 48px;
  border-radius: 8px;
  background: #00bfb3;
  color: #000;
  font-size: 24px;
  font-weight: 500;
  line-height: 48px;
}
.crumbs { flex: 1; display: flex; align-items: center; padding: 0 0 2px 34px; color: #69707d; }
.crumbs strong { color: #343741; font-weight: 500; }
.slash { width: 2px; height: 30px; margin: 0 16px; background: #d3dae6; transform: rotate(15deg); }

.side {
  display: flex;
  flex-direction: column;
  background: #fff;
  box-shadow: 2px 0 6px rgba(60, 75, 100, .28);
  z-index: 2;
}
.recent { display: flex; align-items: center; justify-content: center; height: 98px; padding: 0 3px 2px 0; border-bottom: 2px solid #d3dae6; }
.apps { display: flex; flex-direction: column; align-items: center; gap: 16px; padding: 16px 1px 16px 0; }
.apps a { display: flex; align-items: center; justify-content: center; width: 64px; height: 64px; border-radius: 8px; }
.apps .active { background: #f5f7fa; }
.ico { width: 32px; height: 32px; fill: none; stroke: #343741; stroke-width: 2; }
.ico .g { stroke: #017d73; }
.expand {
  display: flex;
  align-items: center;
  justify-content: center;
  height: 80px;
  margin-top: auto;
  background: #fff;
  box-shadow: 0 -2px 20px rgba(0, 0, 0, .08);
}

/* Query controls */
.page { display: flex; flex-direction: column; }
.controls { padding: 18px 16px 22px; background: #fafbfd; box-shadow: inset 0 5px 6px -4px rgba(60, 75, 100, .25); }
.actions { display: flex; gap: 34px; margin-bottom: 12px; padding-left: 1px; line-height: 40px; color: #006bb4; }
.query { display: flex; height: 80px; margin-bottom: 12px; }
.box {
  display: flex;
  border: 2px solid #e3e4f0;
  background: #fbfcfd;
  box-shadow: 0 3px 4px -1px rgba(80, 90, 130, .14);
}
.search { flex: 1; }
.search input { flex: 1; padding-left: 24px; }
.search input::placeholder { color: #69707d; opacity: 1; }
.box-menu { display: flex; align-items: center; justify-content: center; gap: 14px; width: 108px; border-right: 2px solid #e3e4f0; }
.kql { width: 88px; color: #006bb4; border-left: 2px solid #e3e4f0; }
.dates { margin-left: 16px; }
.range { display: flex; align-items: center; gap: 16px; padding: 0 20px; white-space: nowrap; }
.refresh {
  display: flex;
  align-items: center;
  justify-content: center;
  gap: 18px;
  width: 236px;
  margin-left: 32px;
  padding-bottom: 2px;
  border-radius: 8px;
  background: #006bb4;
  color: #fff;
  font-size: 32px;
  box-shadow: 0 4px 6px -1px rgba(0, 50, 100, .3);
}
.filters { display: flex; align-items: center; height: 56px; padding-left: 6px; }
.dash { width: 22px; height: 2px; margin-left: 12px; background: #d3dae6; }
.pill {
  display: flex;
  align-items: center;
  gap: 14px;
  height: 56px;
  padding: 0 18px 0 14px;
  border: 2px solid #b8bec8;
  border-radius: 4px;
  background: #fbfcfd;
  font-size: 24px;
  font-weight: 500;
  box-shadow: 0 3px 4px -1px rgba(60, 75, 100, .2);
}
.add { margin-left: 26px; color: #006bb4; }

/* Panel */
.panel { flex: 1; display: flex; flex-direction: column; background: linear-gradient(transparent calc(100% - 70px), #e9e9e9); }
.panel-head { display: flex; align-items: center; justify-content: space-between; height: 48px; margin: 2px 0; padding-left: 17px; }
.panel-head h2 { font-size: 24px; font-weight: 700; color: #1a1c21; }
.more { display: flex; align-items: center; justify-content: center; width: 50px; height: 48px; border-radius: 0 8px 0 8px; background: #e9ebed; }

.chart {
  flex: 1;
  display: grid;
  grid-template-columns: 28px 100px minmax(0, 1fr) 58px 28px;
  grid-template-rows: minmax(0, 1fr) auto;
  padding: 34px 24px 0 14px;
  font-size: 21px;
  color: #69707d;
}
.axis-title { display: flex; align-items: center; justify-content: center; }
.axis-title span { writing-mode: vertical-rl; transform: rotate(180deg); font-size: 24px; font-weight: 700; line-height: 28px; white-space: nowrap; }
.y-axis { display: flex; flex-direction: column; justify-content: space-between; margin: -1px 0; }
.y-axis li { display: flex; align-items: center; gap: 8px; height: 2px; }
.y-axis.left li { justify-content: flex-end; }
.y-axis.left li::after, .y-axis.right li::before { content: ""; width: 12px; height: 2px; background: #dadcdf; }
.plot { position: relative; border: solid #dadcdf; border-width: 0 2px 2px; }
.bar { position: absolute; bottom: 0; background: #8dd9e5; }
.point { position: absolute; top: 0; width: 8px; height: 4px; margin-left: -4px; border-radius: 0 0 4px 4px; background: #a9bcd8; }
.tooltip {
  position: absolute;
  left: 66.520%;
  top: 11.900%;
  height: 188px;
  padding: 16px 24px;
  border-collapse: separate;
  border-spacing: 0;
  border-radius: 8px;
  background: #404040;
  box-shadow: 0 10px 20px rgba(0, 0, 0, .22), 0 4px 60px rgba(0, 0, 0, .1);
  font-size: 24px;
  text-align: left;
  white-space: nowrap;
}
.tooltip th { padding: 0 14px 0 0; color: #ccc; font-weight: 500; }
.tooltip td { padding: 0; color: #fff; font-weight: 500; }
.pointer { position: absolute; left: 65.340%; top: 9.500%; }
.x-axis {
  grid-column: 3;
  background:
    linear-gradient(#dadcdf, #dadcdf) left top / 2px 12px no-repeat,
    linear-gradient(#dadcdf, #dadcdf) right top / 2px 12px no-repeat;
}
.x-axis ul { display: grid; grid-template-columns: repeat(11, 1fr); margin: 0 4.167%; line-height: 28px; text-align: center; }
.x-axis li::before { content: ""; display: block; width: 2px; height: 12px; margin: 0 auto; background: #dadcdf; }
.x-axis p { margin-top: 4px; font-size: 24px; font-weight: 700; line-height: 32px; text-align: center; }
.panel-foot { display: flex; padding: 6px 13px 14px; }

/* Dock */
.dock-area { display: flex; justify-content: center; padding: 14px 0 10px; }
.dock {
  display: flex;
  height: 134px;
  padding: 0 6px 0 4px;
  border: 2px solid #75838d;
  border-radius: 44px;
  background: #525f6c;
}
.app-icon { position: relative; display: flex; justify-content: center; align-items: center; width: 112px; height: 84px; margin-top: 18px; }
.running::after {
  content: "";
  position: absolute;
  bottom: -26px;
  left: 50%;
  width: 8px;
  height: 8px;
  margin-left: -4px;
  border-radius: 50%;
  background: #000;
}
.split { width: 2px; height: 98px; margin: 16px 25px 16px 24px; background: #27333f; }
.tile { display: flex; width: 84px; height: 84px; border-radius: 20px; overflow: hidden; box-shadow: 0 2px 4px rgba(0, 0, 0, .25); }
.tile > svg:only-child { width: 100%; height: 100%; }
.bare { width: 84px; height: 84px; }
.white { background: linear-gradient(#fff 60%, #e4e4e4); }
.finder { background: linear-gradient(#1cc5fb, #2070f3); }
.launchpad { background: linear-gradient(#c9ced3, #bcc0c4); }
.mail { background: linear-gradient(#1f6ff2, #1ec0fb); }
.messages { background: linear-gradient(#5df675, #12bf29); }
.maps { background: #5ccc62; }
.petals rect { mix-blend-mode: multiply; opacity: .9; }
.calendar { flex-direction: column; align-items: center; background: linear-gradient(#fb5548 26px, #f8f7f6 26px); }
.month { font-size: 18px; font-weight: 600; line-height: 28px; color: #fff; }
.day { font-size: 46px; font-weight: 300; line-height: 50px; color: #1e1e1e; }
.notes { background: linear-gradient(#ffdb4d, #fdc500 21px, #f9f8f6 21px, #e8e4dc); }
.music { background: linear-gradient(#fb5c74, #fa233b); }
.tv { align-items: center; justify-content: center; background: linear-gradient(#263430, #0b0f10); color: #fff; font-size: 34px; font-weight: 500; line-height: 84px; }
.calculator { background: linear-gradient(#d6d6d6, #c0bfbd); }
.store { background: linear-gradient(#19b4f5, #155cdc); }
.settings { background: linear-gradient(#cfdde4, #8f8c88); }
.terminal { background: #242424; border: 6px solid #000; outline: 3px solid #b9c2c6; outline-offset: -3px; }
.prompt { padding: 4px 6px; font: 700 24px/28px "Liberation Mono", monospace; color: #fff; }
.acrobat { background: #b30b00; }
.zoom { flex: none; width: 92px; height: 92px; border-radius: 30px; background: linear-gradient(#4a94ff, #2a6cf6); }
.preview { overflow: visible; background: #f1f1f0; }
```
